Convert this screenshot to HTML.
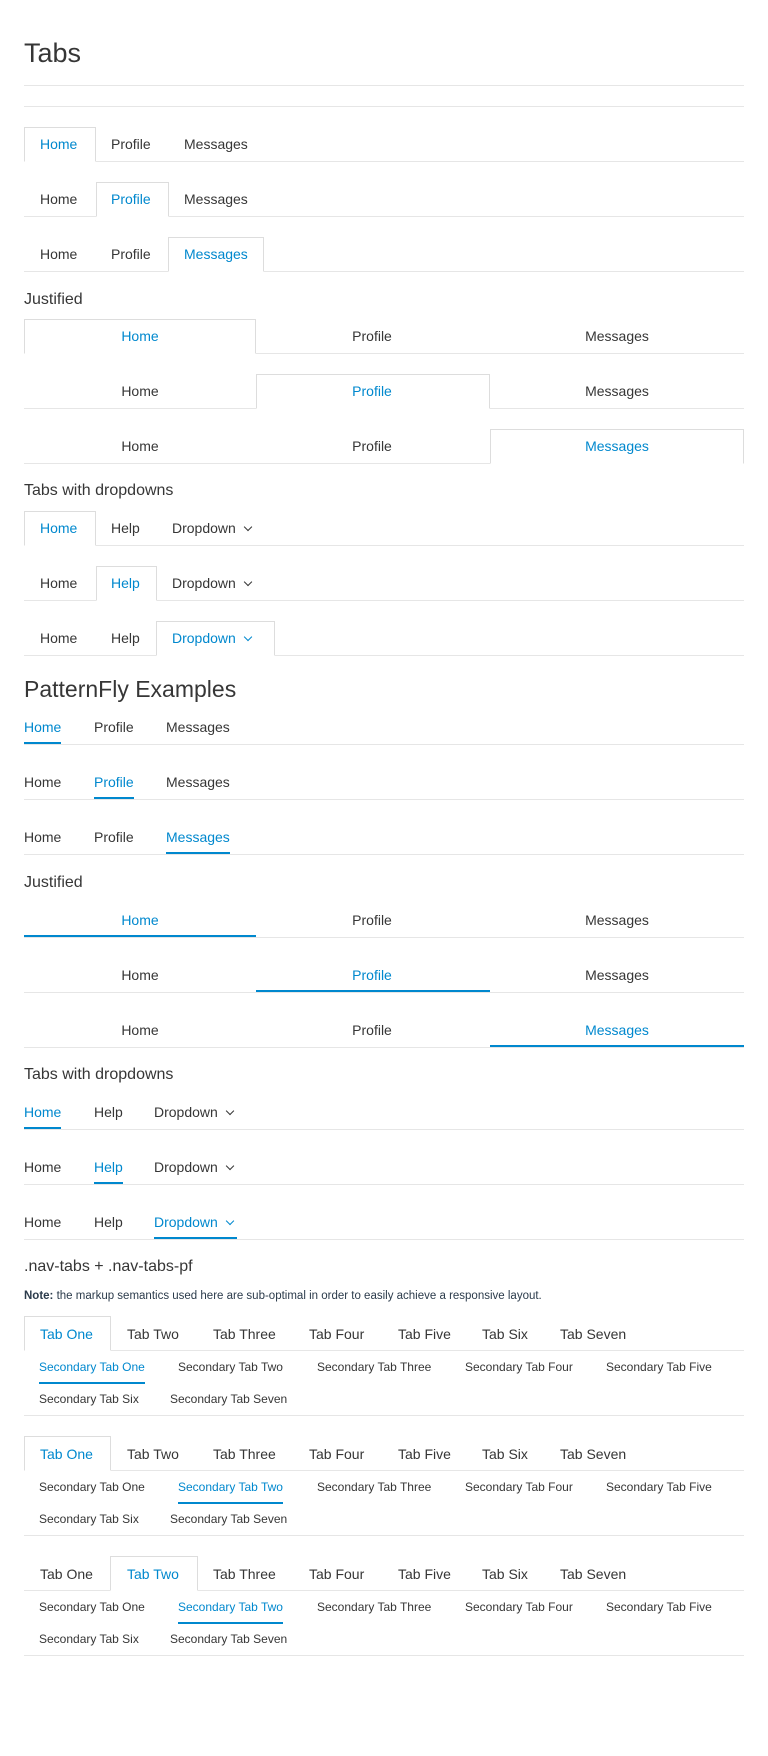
<!DOCTYPE html>
<html><head><meta charset="utf-8"><style>
body{margin:0;width:768px;height:1756px;position:relative;background:#fff;font-family:"Liberation Sans",sans-serif;color:#363636;overflow:hidden}
.l{position:absolute;left:24px;width:720px;height:1px;background:#e6e6e6}
.x{position:absolute;line-height:16px;font-size:14px;white-space:nowrap}
.s{font-size:12px}
.c{transform:translateX(-50%)}
.a{color:#0088ce}
.b{position:absolute;height:35px;border:1px solid #ddd;border-bottom-color:#fff;background:#fff;box-sizing:border-box}
.u{padding-bottom:7px;border-bottom:2px solid #0088ce}
.ul{position:absolute;height:2px;background:#0088ce}
.h{position:absolute;left:24px;white-space:nowrap;line-height:20px}
.car{display:inline-block;width:5px;height:5px;border-right:1.3px solid currentColor;border-bottom:1.3px solid currentColor;transform:rotate(45deg);margin-left:9px;position:relative;top:-3px}
</style></head><body>
<div class="h" style="top:38px;font-size:27px;line-height:30px">Tabs</div>
<div class="l" style="top:85px"></div>
<div class="l" style="top:106px"></div>

<!-- classic -->
<div class="l" style="top:161px"></div><div class="b" style="left:24px;top:127px;width:72px"></div>
<div class="x a" style="left:40px;top:136px">Home</div><div class="x" style="left:111px;top:136px">Profile</div><div class="x" style="left:184px;top:136px">Messages</div>
<div class="l" style="top:216px"></div><div class="b" style="left:96px;top:182px;width:73px"></div>
<div class="x" style="left:40px;top:191px">Home</div><div class="x a" style="left:111px;top:191px">Profile</div><div class="x" style="left:184px;top:191px">Messages</div>
<div class="l" style="top:271px"></div><div class="b" style="left:168px;top:237px;width:96px"></div>
<div class="x" style="left:40px;top:246px">Home</div><div class="x" style="left:111px;top:246px">Profile</div><div class="x a" style="left:184px;top:246px">Messages</div>

<div class="h" style="top:290px;font-size:16px">Justified</div>
<div class="l" style="top:353px"></div><div class="b" style="left:24px;top:319px;width:232px"></div>
<div class="x c a" style="left:140px;top:328px">Home</div><div class="x c" style="left:372px;top:328px">Profile</div><div class="x c" style="left:617px;top:328px">Messages</div>
<div class="l" style="top:408px"></div><div class="b" style="left:256px;top:374px;width:234px"></div>
<div class="x c" style="left:140px;top:383px">Home</div><div class="x c a" style="left:372px;top:383px">Profile</div><div class="x c" style="left:617px;top:383px">Messages</div>
<div class="l" style="top:463px"></div><div class="b" style="left:490px;top:429px;width:254px"></div>
<div class="x c" style="left:140px;top:438px">Home</div><div class="x c" style="left:372px;top:438px">Profile</div><div class="x c a" style="left:617px;top:438px">Messages</div>

<div class="h" style="top:481px;font-size:16px">Tabs with dropdowns</div>
<div class="l" style="top:545px"></div><div class="b" style="left:24px;top:511px;width:72px"></div>
<div class="x a" style="left:40px;top:520px">Home</div><div class="x" style="left:111px;top:520px">Help</div><div class="x" style="left:172px;top:520px">Dropdown<span class="car"></span></div>
<div class="l" style="top:600px"></div><div class="b" style="left:96px;top:566px;width:61px"></div>
<div class="x" style="left:40px;top:575px">Home</div><div class="x a" style="left:111px;top:575px">Help</div><div class="x" style="left:172px;top:575px">Dropdown<span class="car"></span></div>
<div class="l" style="top:655px"></div><div class="b" style="left:156px;top:621px;width:119px"></div>
<div class="x" style="left:40px;top:630px">Home</div><div class="x" style="left:111px;top:630px">Help</div><div class="x a" style="left:172px;top:630px">Dropdown<span class="car"></span></div>

<div class="h" style="top:675px;font-size:23px;line-height:28px">PatternFly Examples</div>
<div class="l" style="top:744px"></div>
<div class="x a u" style="left:24px;top:719px">Home</div><div class="x" style="left:94px;top:719px">Profile</div><div class="x" style="left:166px;top:719px">Messages</div>
<div class="l" style="top:799px"></div>
<div class="x" style="left:24px;top:774px">Home</div><div class="x a u" style="left:94px;top:774px">Profile</div><div class="x" style="left:166px;top:774px">Messages</div>
<div class="l" style="top:854px"></div>
<div class="x" style="left:24px;top:829px">Home</div><div class="x" style="left:94px;top:829px">Profile</div><div class="x a u" style="left:166px;top:829px">Messages</div>

<div class="h" style="top:873px;font-size:16px">Justified</div>
<div class="l" style="top:937px"></div><div class="ul" style="left:24px;top:935px;width:232px"></div>
<div class="x c a" style="left:140px;top:912px">Home</div><div class="x c" style="left:372px;top:912px">Profile</div><div class="x c" style="left:617px;top:912px">Messages</div>
<div class="l" style="top:992px"></div><div class="ul" style="left:256px;top:990px;width:234px"></div>
<div class="x c" style="left:140px;top:967px">Home</div><div class="x c a" style="left:372px;top:967px">Profile</div><div class="x c" style="left:617px;top:967px">Messages</div>
<div class="l" style="top:1047px"></div><div class="ul" style="left:490px;top:1045px;width:254px"></div>
<div class="x c" style="left:140px;top:1022px">Home</div><div class="x c" style="left:372px;top:1022px">Profile</div><div class="x c a" style="left:617px;top:1022px">Messages</div>

<div class="h" style="top:1065px;font-size:16px">Tabs with dropdowns</div>
<div class="l" style="top:1129px"></div>
<div class="x a u" style="left:24px;top:1104px">Home</div><div class="x" style="left:94px;top:1104px">Help</div><div class="x" style="left:154px;top:1104px">Dropdown<span class="car"></span></div>
<div class="l" style="top:1184px"></div>
<div class="x" style="left:24px;top:1159px">Home</div><div class="x a u" style="left:94px;top:1159px">Help</div><div class="x" style="left:154px;top:1159px">Dropdown<span class="car"></span></div>
<div class="l" style="top:1239px"></div>
<div class="x" style="left:24px;top:1214px">Home</div><div class="x" style="left:94px;top:1214px">Help</div><div class="x a u" style="left:154px;top:1214px;padding-right:4px">Dropdown<span class="car"></span></div>

<div class="h" style="top:1257px;font-size:16px">.nav-tabs + .nav-tabs-pf</div>
<div class="h" style="top:1288px;font-size:11.5px;line-height:16px;color:#2b3b4b"><b>Note:</b> the markup semantics used here are sub-optimal in order to easily achieve a responsive layout.</div>

<!-- group 1 -->
<div class="l" style="top:1350px"></div><div class="b" style="left:24px;top:1316px;width:87px"></div>
<div class="x a" style="left:40px;top:1326px">Tab One</div><div class="x" style="left:127px;top:1326px">Tab Two</div><div class="x" style="left:213px;top:1326px">Tab Three</div><div class="x" style="left:309px;top:1326px">Tab Four</div><div class="x" style="left:398px;top:1326px">Tab Five</div><div class="x" style="left:482px;top:1326px">Tab Six</div><div class="x" style="left:560px;top:1326px">Tab Seven</div>
<div class="x s a u" style="left:39px;top:1359px">Secondary Tab One</div><div class="x s" style="left:178px;top:1359px">Secondary Tab Two</div><div class="x s" style="left:317px;top:1359px">Secondary Tab Three</div><div class="x s" style="left:465px;top:1359px">Secondary Tab Four</div><div class="x s" style="left:606px;top:1359px">Secondary Tab Five</div>
<div class="x s" style="left:39px;top:1391px">Secondary Tab Six</div><div class="x s" style="left:170px;top:1391px">Secondary Tab Seven</div>
<div class="l" style="top:1415px"></div>

<!-- group 2 -->
<div class="l" style="top:1470px"></div><div class="b" style="left:24px;top:1436px;width:87px"></div>
<div class="x a" style="left:40px;top:1446px">Tab One</div><div class="x" style="left:127px;top:1446px">Tab Two</div><div class="x" style="left:213px;top:1446px">Tab Three</div><div class="x" style="left:309px;top:1446px">Tab Four</div><div class="x" style="left:398px;top:1446px">Tab Five</div><div class="x" style="left:482px;top:1446px">Tab Six</div><div class="x" style="left:560px;top:1446px">Tab Seven</div>
<div class="x s" style="left:39px;top:1479px">Secondary Tab One</div><div class="x s a u" style="left:178px;top:1479px">Secondary Tab Two</div><div class="x s" style="left:317px;top:1479px">Secondary Tab Three</div><div class="x s" style="left:465px;top:1479px">Secondary Tab Four</div><div class="x s" style="left:606px;top:1479px">Secondary Tab Five</div>
<div class="x s" style="left:39px;top:1511px">Secondary Tab Six</div><div class="x s" style="left:170px;top:1511px">Secondary Tab Seven</div>
<div class="l" style="top:1535px"></div>

<!-- group 3 -->
<div class="l" style="top:1590px"></div><div class="b" style="left:110px;top:1556px;width:88px"></div>
<div class="x" style="left:40px;top:1566px">Tab One</div><div class="x a" style="left:127px;top:1566px">Tab Two</div><div class="x" style="left:213px;top:1566px">Tab Three</div><div class="x" style="left:309px;top:1566px">Tab Four</div><div class="x" style="left:398px;top:1566px">Tab Five</div><div class="x" style="left:482px;top:1566px">Tab Six</div><div class="x" style="left:560px;top:1566px">Tab Seven</div>
<div class="x s" style="left:39px;top:1599px">Secondary Tab One</div><div class="x s a u" style="left:178px;top:1599px">Secondary Tab Two</div><div class="x s" style="left:317px;top:1599px">Secondary Tab Three</div><div class="x s" style="left:465px;top:1599px">Secondary Tab Four</div><div class="x s" style="left:606px;top:1599px">Secondary Tab Five</div>
<div class="x s" style="left:39px;top:1631px">Secondary Tab Six</div><div class="x s" style="left:170px;top:1631px">Secondary Tab Seven</div>
<div class="l" style="top:1655px"></div>
</body></html>
